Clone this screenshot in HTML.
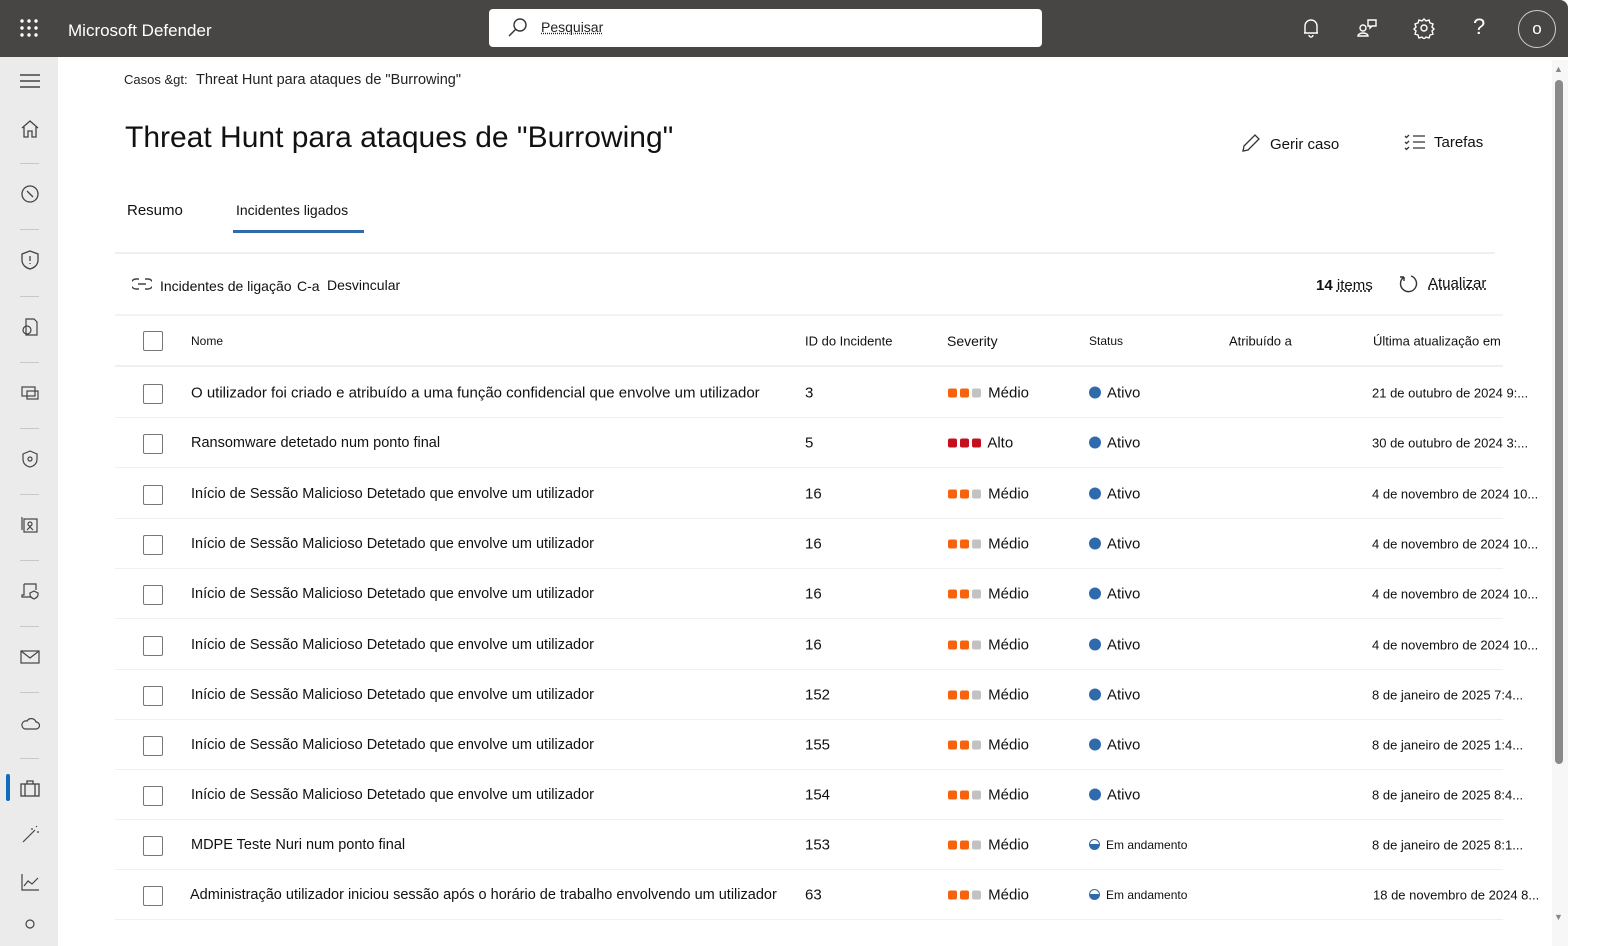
<!DOCTYPE html>
<html><head><meta charset="utf-8"><style>
*{margin:0;padding:0;box-sizing:border-box}
body{width:1600px;height:946px;overflow:hidden;background:#fff;font-family:"Liberation Sans",Arial,sans-serif;color:#111;position:relative}
.top{position:absolute;left:0;top:0;width:1568px;height:57px;background:#484644;border-radius:0 8px 0 0}
.abs{position:absolute}
.side{position:absolute;left:0;top:57px;width:58px;height:889px;background:#ebebeb}
.sep{position:absolute;left:20px;width:19px;height:1px;background:#c8c8c8}
.ic{position:absolute;left:19px;width:22px;height:22px}
.row{position:absolute;left:115px;width:1388px;height:50px;border-bottom:1px solid #f0f0f0}
.row span{position:absolute;top:50%;transform:translateY(-50%);white-space:nowrap;font-size:15px}
.row span.n{font-size:14.5px}
.cb{position:absolute;left:28px;top:16px;width:20px;height:20px;border:1px solid #777;border-radius:2px}
.sq{display:inline-block;width:9px;height:9px;border-radius:2px;margin-right:3px}
.o{background:#f7630c}.g{background:#c2c2c2}.r{background:#c50f1f}
.dot{display:inline-block;width:12px;height:12px;border-radius:50%;background:#2f6aad;margin-right:6px;vertical-align:-1px}
.half{background:linear-gradient(#fff 45%,#2f6aad 45%);border:1px solid #2f6aad;width:11px;height:11px}
</style></head><body>
<div class="top"></div>
<svg class="abs" style="left:20px;top:19px" width="18" height="18" fill="#fff"><g><circle cx="2" cy="2" r="1.7"/><circle cx="9" cy="2" r="1.7"/><circle cx="16" cy="2" r="1.7"/><circle cx="2" cy="9" r="1.7"/><circle cx="9" cy="9" r="1.7"/><circle cx="16" cy="9" r="1.7"/><circle cx="2" cy="16" r="1.7"/><circle cx="9" cy="16" r="1.7"/><circle cx="16" cy="16" r="1.7"/></g></svg>
<div class="abs" style="left:68px;top:21px;color:#fff;font-size:17px">Microsoft Defender</div>
<div class="abs" style="left:489px;top:9px;width:553px;height:38px;background:#fff;border-radius:4px"></div>
<svg class="abs" style="left:507px;top:17px" width="22" height="22" fill="none" stroke="#333" stroke-width="1.4"><circle cx="13" cy="8" r="6"/><path d="M9 12L2 19"/></svg>
<div class="abs" style="left:541px;top:19px;font-size:14px;color:#222;text-decoration:underline dotted">Pesquisar</div>
<svg class="abs" style="left:1300px;top:17px" width="22" height="22" fill="none" stroke="#fff" stroke-width="1.4"><path d="M5 16V9a6 6 0 0 1 12 0v7H4h14M9 18a2 2 0 0 0 4 0"/></svg>
<svg class="abs" style="left:1356px;top:17px" width="24" height="22" fill="none" stroke="#fff" stroke-width="1.4"><circle cx="7" cy="11" r="3"/><path d="M2 19a5 3 0 0 1 10 0z"/><path d="M12 3h8v6h-4l-2 2V9h-2z"/></svg>
<svg class="abs" style="left:1413px;top:17px" width="22" height="22" fill="none" stroke="#fff" stroke-width="1.4"><circle cx="11" cy="11" r="3"/><path d="M11 2l2 2 3-1 1 3 3 1-1 3 2 2-2 2 1 3-3 1-1 3-3-1-2 2-2-2-3 1-1-3-3-1 1-3-2-2 2-2-1-3 3-1 1-3 3 1z"/></svg>
<div class="abs" style="left:1473px;top:14px;color:#fff;font-size:22px">?</div>
<div class="abs" style="left:1518px;top:10px;width:38px;height:38px;border:1px solid #ccc;border-radius:50%;color:#fff;font-size:17px;text-align:center;line-height:35px">o</div>

<div class="side"></div>
<svg class="abs" style="left:20px;top:74px" width="20" height="14" stroke="#444" stroke-width="1.4"><path d="M0 1h20M0 7h20M0 13h20"/></svg>
<svg class="ic" style="top:118px" fill="none" stroke="#444" stroke-width="1.3"><path d="M3 10L11 3l8 7M5 9v10h4v-6h4v6h4V9"/></svg>
<div class="sep" style="top:163px"></div>
<svg class="ic" style="top:183px" fill="none" stroke="#444" stroke-width="1.3"><circle cx="11" cy="11" r="8"/><path d="M8 8l6 6"/></svg>
<div class="sep" style="top:229px"></div>
<svg class="ic" style="top:249px" fill="none" stroke="#444" stroke-width="1.3"><path d="M11 2l8 3v6c0 5-4 8-8 9-4-1-8-4-8-9V5z M11 7v5M11 14v1"/></svg>
<div class="sep" style="top:296px"></div>
<svg class="ic" style="top:316px" fill="none" stroke="#444" stroke-width="1.2"><path d="M7 3h8l3 3v13H7z"/><circle cx="8" cy="14" r="4"/></svg>
<div class="sep" style="top:362px"></div>
<svg class="ic" style="top:382px" fill="none" stroke="#444" stroke-width="1.2"><rect x="3" y="5" width="13" height="9"/><rect x="8" y="9" width="11" height="8"/></svg>
<div class="sep" style="top:428px"></div>
<svg class="ic" style="top:448px" fill="none" stroke="#444" stroke-width="1.2"><path d="M11 3l7 3v5c0 5-3 7-7 8-4-1-7-3-7-8V6z"/><circle cx="11" cy="11" r="2"/></svg>
<div class="sep" style="top:494px"></div>
<svg class="ic" style="top:514px" fill="none" stroke="#444" stroke-width="1.2"><rect x="5" y="5" width="13" height="13"/><path d="M3 3v13"/><circle cx="11" cy="10" r="2"/><path d="M8 16l3-3 3 3"/></svg>
<div class="sep" style="top:560px"></div>
<svg class="ic" style="top:580px" fill="none" stroke="#444" stroke-width="1.2"><path d="M5 4h12v6M5 4v11H3v2h9"/><path d="M15 11l4 2v2c0 2-2 3-4 4-2-1-4-2-4-4v-2z"/></svg>
<div class="sep" style="top:626px"></div>
<svg class="ic" style="top:646px" fill="none" stroke="#444" stroke-width="1.2"><rect x="2" y="5" width="18" height="12"/><path d="M2 5l9 7 9-7"/></svg>
<div class="sep" style="top:692px"></div>
<svg class="ic" style="top:712px" fill="none" stroke="#444" stroke-width="1.2"><path d="M6 17h11a3.5 3.5 0 0 0 0-7 5 5 0 0 0-9-1 4 4 0 0 0-2 8z"/></svg>
<div class="sep" style="top:758px"></div>
<div class="abs" style="left:6px;top:774px;width:4px;height:27px;background:#0f6cbd;border-radius:2px"></div>
<svg class="ic" style="top:778px" fill="none" stroke="#444" stroke-width="1.3"><rect x="2" y="6" width="18" height="12"/><path d="M8 6V3h6v3M6 6v12M16 6v12"/></svg>
<svg class="ic" style="top:824px" fill="none" stroke="#444" stroke-width="1.2"><path d="M4 18L16 6M13 4v2M18 8h2M17 3l1-1"/></svg>
<svg class="ic" style="top:871px" fill="none" stroke="#444" stroke-width="1.2"><path d="M3 3v16h17M5 15l4-5 4 3 6-6"/></svg>
<svg class="ic" style="top:916px" fill="none" stroke="#444" stroke-width="1.2"><circle cx="11" cy="8" r="4"/></svg>

<div class="abs" style="left:1552px;top:60px;width:16px;height:886px;background:#f7f7f7"></div>
<div class="abs" style="left:1555px;top:80px;width:8px;height:684px;background:#8a8a8a;border-radius:4px"></div>
<div class="abs" style="left:1554px;top:64px;font-size:9px;color:#888">▲</div>
<div class="abs" style="left:1554px;top:912px;font-size:9px;color:#888">▼</div>

<div class="abs" style="left:124px;top:72px;font-size:13px;color:#222">Casos &amp;gt:</div>
<div class="abs" style="left:196px;top:72px;font-size:14.5px;color:#222">Threat Hunt para ataques de "Burrowing"</div>
<div class="abs" style="left:125px;top:121px;font-size:30px;color:#111">Threat Hunt para ataques de "Burrowing"</div>
<svg class="abs" style="left:1240px;top:132px" width="22" height="22" fill="none" stroke="#333" stroke-width="1.3"><path d="M3 19l1-5L15 3l4 4L8 18z"/></svg>
<div class="abs" style="left:1270px;top:136px;font-size:15px">Gerir caso</div>
<svg class="abs" style="left:1404px;top:134px" width="22" height="18" fill="none" stroke="#333" stroke-width="1.3"><path d="M9 2h12M9 8h12M9 14h12M1 2l1.5 1.5L5 1M1 8l1.5 1.5L5 7M1 14l1.5 1.5L5 13"/></svg>
<div class="abs" style="left:1434px;top:134px;font-size:15px">Tarefas</div>
<div class="abs" style="left:127px;top:202px;font-size:15px">Resumo</div>
<div class="abs" style="left:236px;top:202px;font-size:14px">Incidentes ligados</div>
<div class="abs" style="left:233px;top:230px;width:131px;height:3px;background:#2f6aad"></div>
<div class="abs" style="left:115px;top:252px;width:1380px;height:2px;background:#efefef"></div>
<svg class="abs" style="left:132px;top:278px" width="20" height="12" fill="none" stroke="#444" stroke-width="1.4"><path d="M7 1H4a5 5 0 0 0 0 10h3M13 1h3a5 5 0 0 1 0 10h-3M6 6h8"/></svg>
<div class="abs" style="left:160px;top:278px;font-size:14px">Incidentes de ligação</div>
<div class="abs" style="left:297px;top:278px;font-size:14px">C-a</div>
<div class="abs" style="left:327px;top:277px;font-size:14px">Desvincular</div>
<div class="abs" style="left:1316px;top:277px;font-size:15px"><b>14</b> <span style="text-decoration:underline dotted">items</span></div>
<svg class="abs" style="left:1398px;top:273px" width="22" height="22" fill="none" stroke="#333" stroke-width="1.4"><path d="M6 4a8 8 0 1 0 7-1M6 4V8M6 4h-4"/></svg>
<div class="abs" style="left:1428px;top:275px;font-size:15px;text-decoration:underline dotted">Atualizar</div>
<div class="abs" style="left:115px;top:314px;width:1388px;height:2px;background:#f3f3f3"></div>

<div class="row" style="top:317px;border-bottom:2px solid #f0f0f0">
<div class="cb" style="top:14px"></div>
<span style="left:76px;font-size:12px">Nome</span><span style="left:690px;font-size:13px">ID do Incidente</span><span style="left:832px;font-size:14px">Severity</span><span style="left:974px;font-size:12px">Status</span><span style="left:1114px;font-size:13px">Atribuído a</span><span style="left:1258px;font-size:13px">Última atualização em</span></div>

<div class="row" style="top:368px"><div class="cb"></div><span style="left:76px">O utilizador foi criado e atribuído a uma função confidencial que envolve um utilizador</span><span style="left:690px">3</span><span style="left:833px"><i class="sq o"></i><i class="sq o"></i><i class="sq g"></i> Médio</span><span style="left:974px"><i class="dot"></i>Ativo</span><span style="left:1257px;font-size:13px">21 de outubro de 2024 9:...</span></div>
<div class="row" style="top:418px"><div class="cb"></div><span class="n" style="left:76px">Ransomware detetado num ponto final</span><span style="left:690px">5</span><span style="left:833px"><i class="sq r"></i><i class="sq r"></i><i class="sq r"></i> Alto</span><span style="left:974px"><i class="dot"></i>Ativo</span><span style="left:1257px;font-size:13px">30 de outubro de 2024 3:...</span></div>
<div class="row" style="top:469px"><div class="cb"></div><span class="n" style="left:76px">Início de Sessão Malicioso Detetado que envolve um utilizador</span><span style="left:690px">16</span><span style="left:833px"><i class="sq o"></i><i class="sq o"></i><i class="sq g"></i> Médio</span><span style="left:974px"><i class="dot"></i>Ativo</span><span style="left:1257px;font-size:13px">4 de novembro de 2024 10...</span></div>
<div class="row" style="top:519px"><div class="cb"></div><span class="n" style="left:76px">Início de Sessão Malicioso Detetado que envolve um utilizador</span><span style="left:690px">16</span><span style="left:833px"><i class="sq o"></i><i class="sq o"></i><i class="sq g"></i> Médio</span><span style="left:974px"><i class="dot"></i>Ativo</span><span style="left:1257px;font-size:13px">4 de novembro de 2024 10...</span></div>
<div class="row" style="top:569px"><div class="cb"></div><span class="n" style="left:76px">Início de Sessão Malicioso Detetado que envolve um utilizador</span><span style="left:690px">16</span><span style="left:833px"><i class="sq o"></i><i class="sq o"></i><i class="sq g"></i> Médio</span><span style="left:974px"><i class="dot"></i>Ativo</span><span style="left:1257px;font-size:13px">4 de novembro de 2024 10...</span></div>
<div class="row" style="top:620px"><div class="cb"></div><span class="n" style="left:76px">Início de Sessão Malicioso Detetado que envolve um utilizador</span><span style="left:690px">16</span><span style="left:833px"><i class="sq o"></i><i class="sq o"></i><i class="sq g"></i> Médio</span><span style="left:974px"><i class="dot"></i>Ativo</span><span style="left:1257px;font-size:13px">4 de novembro de 2024 10...</span></div>
<div class="row" style="top:670px"><div class="cb"></div><span class="n" style="left:76px">Início de Sessão Malicioso Detetado que envolve um utilizador</span><span style="left:690px">152</span><span style="left:833px"><i class="sq o"></i><i class="sq o"></i><i class="sq g"></i> Médio</span><span style="left:974px"><i class="dot"></i>Ativo</span><span style="left:1257px;font-size:13px">8 de janeiro de 2025 7:4...</span></div>
<div class="row" style="top:720px"><div class="cb"></div><span class="n" style="left:76px">Início de Sessão Malicioso Detetado que envolve um utilizador</span><span style="left:690px">155</span><span style="left:833px"><i class="sq o"></i><i class="sq o"></i><i class="sq g"></i> Médio</span><span style="left:974px"><i class="dot"></i>Ativo</span><span style="left:1257px;font-size:13px">8 de janeiro de 2025 1:4...</span></div>
<div class="row" style="top:770px"><div class="cb"></div><span class="n" style="left:76px">Início de Sessão Malicioso Detetado que envolve um utilizador</span><span style="left:690px">154</span><span style="left:833px"><i class="sq o"></i><i class="sq o"></i><i class="sq g"></i> Médio</span><span style="left:974px"><i class="dot"></i>Ativo</span><span style="left:1257px;font-size:13px">8 de janeiro de 2025 8:4...</span></div>
<div class="row" style="top:820px"><div class="cb"></div><span class="n" style="left:76px">MDPE Teste Nuri num ponto final</span><span style="left:690px">153</span><span style="left:833px"><i class="sq o"></i><i class="sq o"></i><i class="sq g"></i> Médio</span><span style="left:974px;font-size:12px"><i class="dot half"></i>Em andamento</span><span style="left:1257px;font-size:13px">8 de janeiro de 2025 8:1...</span></div>
<div class="row" style="top:870px"><div class="cb"></div><span class="n" style="left:75px">Administração utilizador iniciou sessão após o horário de trabalho envolvendo um utilizador</span><span style="left:690px">63</span><span style="left:833px"><i class="sq o"></i><i class="sq o"></i><i class="sq g"></i> Médio</span><span style="left:974px;font-size:12px"><i class="dot half"></i>Em andamento</span><span style="left:1258px;font-size:13px">18 de novembro de 2024 8...</span></div>
</body></html>
